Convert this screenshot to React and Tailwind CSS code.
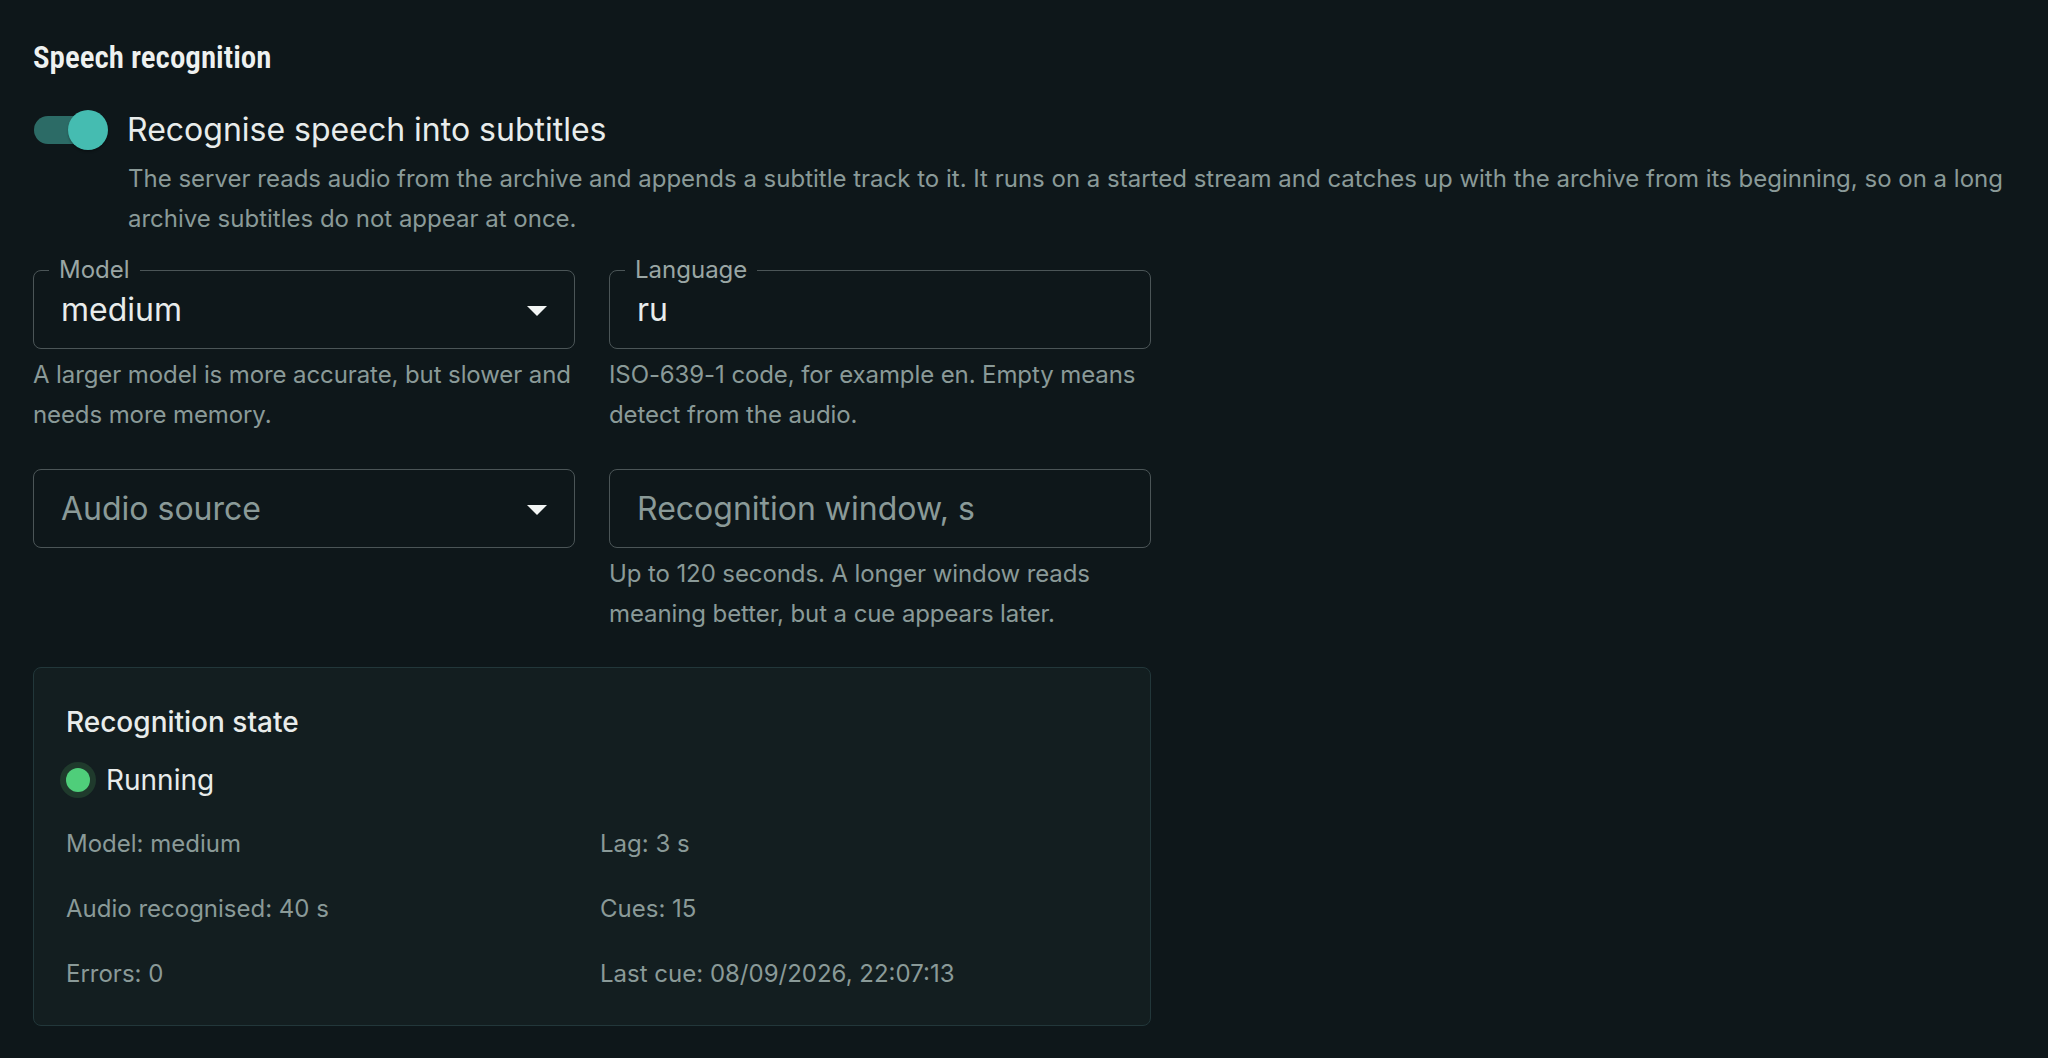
import React from "react";

const inter = { fontFamily: "Inter, 'Noto Sans', sans-serif" };

const ArrowDrop = () => (
  <svg viewBox="0 0 24 24" className="absolute right-[13px] top-1/2 -translate-y-1/2 w-[48px] h-[48px] fill-[#f2f5f4]">
    <path d="M7 10l5 5 5-5z" />
  </svg>
);

const Field = ({ label, value, placeholder, select, helper }) => {
  return (
    <div className="flex flex-col">
      <div className="relative h-[79px] border border-[#4b5557] rounded-[8px] flex items-center pl-[27px]">
        {label && (
          <span className="absolute top-[-13px] left-[15px] px-[10px] bg-[#0e171a] text-[24px] leading-[24px] text-[#9aa6a4]">
            {label}
          </span>
        )}
        {value ? (
          <span className="text-[32px] leading-[46px] text-[#e8eceb]">{value}</span>
        ) : (
          <span className="text-[32px] leading-[46px] text-[#8a9a98]">{placeholder}</span>
        )}
        {select && <ArrowDrop />}
      </div>
      {helper && (
        <p className="mt-[6px] text-[24px] leading-[40px] tracking-[-0.1px] text-[#8a9a98]">{helper}</p>
      )}
    </div>
  );
};

const Stat = ({ children }) => <div className="h-[40px]">{children}</div>;

export default function App() {
  return (
    <div className="min-h-screen bg-[#0e171a] px-[33px] pt-[40px]" style={inter}>
      <h2
        className="text-[31px] leading-[36px] font-semibold text-[#eef1f0]"
        style={{ fontFamily: "'Roboto Condensed', 'Liberation Sans Narrow', 'DejaVu Sans Condensed', sans-serif" }}
      >
        Speech recognition
      </h2>

      {/* switch + label */}
      <div className="mt-[30px] flex items-center">
        <div className="relative ml-px w-[74px] h-[40px] shrink-0">
          <div className="absolute left-0 top-[6px] w-[68px] h-[28px] rounded-full bg-[#2c6b66]" />
          <div className="absolute left-[34px] top-0 w-[40px] h-[40px] rounded-full bg-[#45bcb1] shadow-[0_2px_2px_rgba(0,0,0,0.25)]" />
        </div>
        <span className="ml-[19px] text-[32px] leading-[48px] text-[#e8eceb]">Recognise speech into subtitles</span>
      </div>
      <p className="pl-[95px] mt-[5px] text-[24px] leading-[40px] text-[#8a9a98]">
        The server reads audio from the archive and appends a subtitle track to it. It runs on a started stream and
        catches up with the archive from its beginning, so on a long archive subtitles do not appear at once.
      </p>

      <div className="mt-[31px] grid grid-cols-[542px_542px] gap-x-[34px] gap-y-[34px] items-start">
        <Field label="Model" value="medium" select helper="A larger model is more accurate, but slower and needs more memory." />
        <Field label="Language" value="ru" helper="ISO-639-1 code, for example en. Empty means detect from the audio." />
        <Field placeholder="Audio source" select />
        <Field
          placeholder="Recognition window, s"
          helper="Up to 120 seconds. A longer window reads meaning better, but a cue appears later."
        />
      </div>

      <div className="mt-[33px] w-[1118px] border border-[#22373a] bg-[#131e20] rounded-[8px] px-[32px] pt-[34px] pb-[31px]">
        <div className="text-[28px] leading-[40px] font-medium text-[#e8eceb]">Recognition state</div>
        <div className="mt-[18px] h-[40px] flex items-center gap-[16px]">
          <span className="w-[24px] h-[24px] rounded-full bg-[#4fce7a] shadow-[0_0_0_6px_#1f3a2c]" />
          <span className="text-[28px] leading-[40px] text-[#e8eceb]">Running</span>
        </div>
        <div className="mt-[24px] grid grid-cols-2 gap-x-[16px] gap-y-[25px] text-[24px] leading-[40px] text-[#8a9a98]">
          <Stat>Model: medium</Stat>
          <Stat>Lag: 3 s</Stat>
          <Stat>Audio recognised: 40 s</Stat>
          <Stat>Cues: 15</Stat>
          <Stat>Errors: 0</Stat>
          <Stat>Last cue: 08/09/2026, 22:07:13</Stat>
        </div>
      </div>
    </div>
  );
}
